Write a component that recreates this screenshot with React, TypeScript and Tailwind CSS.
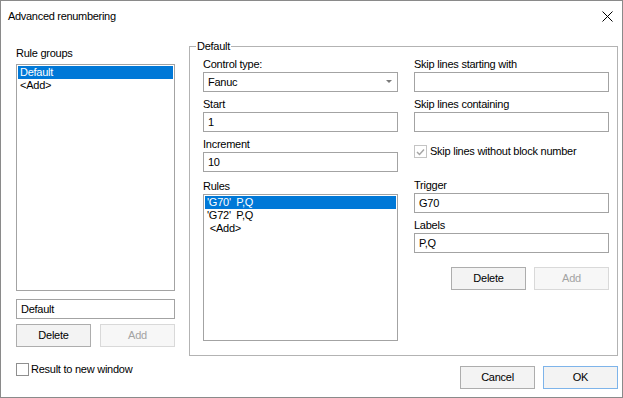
import React from 'react'

const field = 'h-[20px] border border-[#a3a3a3] bg-white px-[4px] flex items-center leading-none'
const label = 'h-[15px] flex items-end leading-none pb-[2px]'
const btn = 'w-[75px] h-[23px] border flex items-center justify-center leading-none'

const TextBox = ({ value = '' }: { value?: string }) => <div className={field}>{value}</div>

const ListBox = ({ items, height }: { items: string[]; height: string }) => (
  <div className={`${height} border border-[#a3a3a3] bg-white p-[1px]`}>
    {items.map((item, i) => (
      <div
        key={i}
        className={`h-[13px] flex items-center pl-[2px] leading-none whitespace-pre ${
          i === 0 ? 'bg-[#0078d7] text-white' : ''
        }`}
      >
        {item}
      </div>
    ))}
  </div>
)

const Button = ({ text, disabled, focused }: { text: string; disabled?: boolean; focused?: boolean }) => (
  <div
    className={`${btn} ${
      disabled
        ? 'border-[#d9d9d9] bg-[#f7f7f7] text-[#a3a3a3]'
        : focused
          ? 'border-[#7eb4ea] bg-[#f3f3f3]'
          : 'border-[#adadad] bg-[#f3f3f3]'
    }`}
  >
    {text}
  </div>
)

const CheckBox = ({ checked, disabled }: { checked?: boolean; disabled?: boolean }) => (
  <div
    className={`w-[13px] h-[13px] border flex items-center justify-center bg-white ${
      disabled ? 'border-[#c4c4c4]' : 'border-[#8f8f8f]'
    }`}
  >
    {checked && (
      <svg width="9" height="8" viewBox="0 0 9 8">
        <path d="M1 4 L3.5 6.5 L8 1.5" fill="none" stroke="#a6a6a6" strokeWidth="1.5" />
      </svg>
    )}
  </div>
)

export default function App() {
  return (
    <div className="w-[623px] h-[398px] border border-[#8a8a8a] bg-white flex flex-col text-[11px] tracking-[-0.25px] text-black font-['Liberation_Sans',sans-serif]">
      {/* title bar */}
      <div className="h-[31px] flex items-center justify-between pl-[7px] pr-[8px]">
        <span className="text-[11px] tracking-[-0.3px]">Advanced renumbering</span>
        <svg width="11" height="11" viewBox="0 0 11 11" className="mr-[1px]">
          <path d="M0.5 0.5 L10.5 10.5 M10.5 0.5 L0.5 10.5" stroke="#000" strokeWidth="1" />
        </svg>
      </div>

      <div className="flex-1 flex flex-col pl-[15px] pr-[4px]">
        <div className="flex gap-[14px] items-start">
          {/* rule groups */}
          <div className="w-[159px] shrink-0 mt-[14px] flex flex-col">
            <div className={label}>Rule groups</div>
            <div className="mt-[3px]">
              <ListBox items={['Default', '<Add>']} height="h-[227px]" />
            </div>
            <div className="mt-[8px]">
              <TextBox value="Default" />
            </div>
            <div className="mt-[5px] flex justify-between">
              <Button text="Delete" />
              <Button text="Add" disabled />
            </div>
          </div>

          {/* group box */}
          <div className="relative w-[429px] shrink-0 h-[310px] mt-[14px] border border-[#b3b3b3]">
            <span className="absolute -top-[8px] left-[6px] bg-white px-[1px] leading-[15px]">Default</span>
            <div className="flex gap-[16px] pl-[13px] pt-[10px]">
              <div className="w-[195px] flex flex-col">
                <div className={label}>Control type:</div>
                <div className={`${field} justify-between pr-[5px]`}>
                  <span>Fanuc</span>
                  <svg width="6" height="4" viewBox="0 0 6 4">
                    <path d="M0 0 L6 0 L3 3 Z" fill="#7a7a7a" />
                  </svg>
                </div>
                <div className={`${label} mt-[5px]`}>Start</div>
                <TextBox value="1" />
                <div className={`${label} mt-[5px]`}>Increment</div>
                <TextBox value="10" />
                <div className={`${label} mt-[7px]`}>Rules</div>
                <ListBox items={["'G70'  P,Q", "'G72'  P,Q", ' <Add>']} height="h-[147px]" />
              </div>

              <div className="w-[195px] flex flex-col">
                <div className={label}>Skip lines starting with</div>
                <TextBox />
                <div className={`${label} mt-[5px]`}>Skip lines containing</div>
                <TextBox />
                <div className="mt-[13px] flex items-center gap-[3px]">
                  <CheckBox checked disabled />
                  <span className="leading-none">Skip lines without block number</span>
                </div>
                <div className={`${label} mt-[20px]`}>Trigger</div>
                <TextBox value="G70" />
                <div className={`${label} mt-[5px]`}>Labels</div>
                <TextBox value="P,Q" />
                <div className="mt-[14px] flex justify-end gap-[8px]">
                  <Button text="Delete" />
                  <Button text="Add" disabled />
                </div>
              </div>
            </div>
          </div>
        </div>

        {/* bottom row */}
        <div className="flex justify-between items-start">
          <div className="mt-[7px] flex items-center gap-[2px]">
            <CheckBox />
            <span className="leading-none">Result to new window</span>
          </div>
          <div className="mt-[10px] flex gap-[8px]">
            <Button text="Cancel" />
            <Button text="OK" focused />
          </div>
        </div>
      </div>
    </div>
  )
}
